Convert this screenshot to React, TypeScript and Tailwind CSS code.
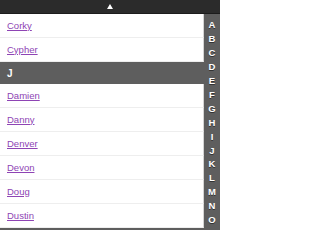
const topNames = ["Corky", "Cypher"];
const jNames = ["Damien", "Danny", "Denver", "Devon", "Doug", "Dustin"];
const letters = "ABCDEFGHIJKLMNO".split("");

function NameRow({ name }: { name: string }) {
  return (
    <li className="h-6 flex items-center px-[7px] bg-white border-b border-[#eeeeee] border-r border-r-[#d4d4d4]">
      <a href="#" className="text-[9.5px] text-[#8e44b4] underline leading-none">
        {name}
      </a>
    </li>
  );
}

export default function App() {
  return (
    <div className="w-[220px] h-[230px] overflow-hidden bg-[#5e5e5e] flex flex-col font-['Liberation_Sans',Arial,sans-serif]">
      <div className="h-[14px] shrink-0 bg-[#2b2b2b] border-b border-[#1c1c1c] flex items-center justify-center">
        <svg width="6" height="5" viewBox="0 0 6 5" className="-ml-[1px]">
          <polygon points="3,0 6,5 0,5" fill="#ffffff" />
        </svg>
      </div>
      <div className="flex flex-1 min-h-0">
        <ul className="w-[204px] shrink-0 flex flex-col">
          {topNames.map((n) => (
            <NameRow key={n} name={n} />
          ))}
          <li className="h-[22px] flex items-center px-[7px] text-white text-[10px] font-bold">J</li>
          {jNames.map((n) => (
            <NameRow key={n} name={n} />
          ))}
        </ul>
        <div className="flex-1 flex flex-col items-center pt-[4px]">
          {letters.map((l) => (
            <span
              key={l}
              className="h-[13.93px] flex items-center text-[9.5px] font-bold text-white leading-none [text-shadow:0_1px_0_#333]"
            >
              {l}
            </span>
          ))}
        </div>
      </div>
    </div>
  );
}
